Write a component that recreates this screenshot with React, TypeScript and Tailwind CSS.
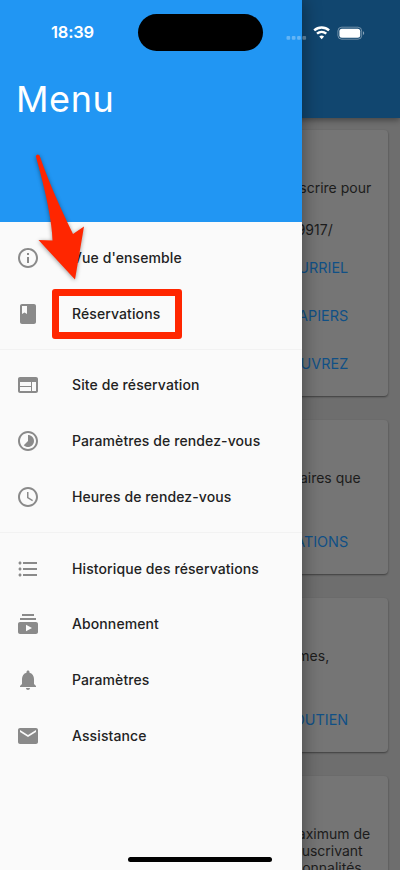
import React from "react";

const ICONS = {
  info: "M11 7h2v2h-2zm0 4h2v6h-2zm1-9C6.48 2 2 6.48 2 12s4.48 10 10 10 10-4.48 10-10S17.52 2 12 2zm0 18c-4.41 0-8-3.59-8-8s3.59-8 8-8 8 3.59 8 8-3.59 8-8 8z",
  book: "M18 2H6c-1.1 0-2 .9-2 2v16c0 1.1.9 2 2 2h12c1.1 0 2-.9 2-2V4c0-1.1-.9-2-2-2zM6 4h5v8l-2.5-1.5L6 12V4z",
  web: "M20 4H4c-1.1 0-1.99.9-1.99 2L2 18c0 1.1.9 2 2 2h16c1.1 0 2-.9 2-2V6c0-1.1-.9-2-2-2zm-5 14H4v-4h11v4zm0-5H4V9h11v4zm5 5h-4V9h4v9z",
  timelapse: "M16.24 7.76C15.07 6.59 13.54 6 12 6v6l-4.24 4.24c2.34 2.34 6.14 2.34 8.49 0 2.34-2.34 2.34-6.14-.01-8.48zM12 2C6.48 2 2 6.48 2 12s4.48 10 10 10 10-4.48 10-10S17.52 2 12 2zm0 18c-4.42 0-8-3.58-8-8s3.58-8 8-8 8 3.58 8 8-3.58 8-8 8z",
  clock: "M11.99 2C6.47 2 2 6.48 2 12s4.47 10 9.99 10C17.52 22 22 17.52 22 12S17.52 2 11.99 2zM12 20c-4.42 0-8-3.58-8-8s3.58-8 8-8 8 3.58 8 8-3.58 8-8 8zm.5-13H11v6l5.25 3.15.75-1.23-4.5-2.67z",
  list: "M4 10.5c-.83 0-1.5.67-1.5 1.5s.67 1.5 1.5 1.5 1.5-.67 1.5-1.5-.67-1.5-1.5-1.5zm0-6c-.83 0-1.5.67-1.5 1.5S3.17 7.5 4 7.5 5.5 6.83 5.5 6 4.83 4.5 4 4.5zm0 12c-.83 0-1.5.68-1.5 1.5s.68 1.5 1.5 1.5 1.5-.68 1.5-1.5-.67-1.5-1.5-1.5zM7 19h14v-2H7v2zm0-6h14v-2H7v2zm0-8v2h14V5H7z",
  subscriptions: "M20 8H4V6h16v2zm-2-6H6v2h12V2zm4 10v8c0 1.1-.9 2-2 2H4c-1.1 0-2-.9-2-2v-8c0-1.1.9-2 2-2h16c1.1 0 2 .9 2 2zm-6 4-6-3.27v6.53L16 16z",
  bell: "M12 22c1.1 0 2-.9 2-2h-4c0 1.1.89 2 2 2zm6-6v-5c0-3.07-1.64-5.64-4.5-6.32V4c0-.83-.67-1.5-1.5-1.5s-1.5.67-1.5 1.5v.68C7.63 5.36 6 7.92 6 11v5l-2 2v1h16v-1l-2-2z",
  mail: "M20 4H4c-1.1 0-1.99.9-1.99 2L2 18c0 1.1.9 2 2 2h16c1.1 0 2-.9 2-2V6c0-1.1-.9-2-2-2zm0 4-8 5-8-5V6l8 5 8-5v2z",
};

function Item({ icon, label, track = "tracking-[0.1px]" }: { icon: keyof typeof ICONS; label: string; track?: string }) {
  return (
    <li className="flex h-[55.75px] items-center gap-8 pl-4">
      <svg viewBox="0 0 24 24" className="size-6 shrink-0 fill-[#8a8a8a]">
        <path d={ICONS[icon]} />
      </svg>
      <span className={`whitespace-nowrap text-[14px] leading-5 font-medium text-[#222] ${track}`}>{label}</span>
    </li>
  );
}

function Divider() {
  return (
    <li className="flex h-4 items-center">
      <div className="h-px w-full bg-[#f2f2f2]" />
    </li>
  );
}

function Card({ size, children }: { size: string; children: React.ReactNode }) {
  return (
    <section className={`ml-3 mr-[12.3px] flex shrink-0 flex-col items-end overflow-hidden rounded-[4px] bg-[#757575] text-[14px] leading-[17px] text-[#1c1c1c] shadow-[0_1px_2px_rgba(0,0,0,0.45)] ${size}`}>
      {children}
    </section>
  );
}

function Action({ label }: { label: string }) {
  return (
    <div className="flex h-[47.7px] shrink-0 items-center pr-[39.5px] text-[14.4px] text-[#105086]">{label}</div>
  );
}

export default function App() {
  return (
    <div className="relative h-[870px] w-[400px] overflow-hidden bg-[#6e6e6e] font-['Inter','Liberation_Sans',sans-serif]">
      <main className="flex h-full flex-col">
        <header className="relative h-[117.5px] shrink-0 bg-[#11466f] shadow-[0_2px_6px_rgba(0,0,0,0.4)]" />
        <div className="flex flex-col gap-6 pt-3">
          <Card size="h-[266.5px]">
            <p className="mt-[49px] pr-[16.5px]">scrire pour</p>
            <p className="mt-[25px] mb-[6.5px] pr-[55px]">9917/</p>
            <Action label="URRIEL" />
            <Action label="PAPIERS" />
            <Action label="OUVREZ" />
          </Card>
          <Card size="h-[154px]">
            <p className="mt-[49px] mb-8 pr-[27px]">aires que</p>
            <Action label="ATIONS" />
          </Card>
          <Card size="h-[154px]">
            <p className="mt-[49px] mb-8 pr-[58.5px]">mes,</p>
            <Action label="OUTIEN" />
          </Card>
          <Card size="h-[154px]">
            <p className="mt-[49px] pr-[17.5px]">aximum de</p>
            <p className="pr-[25px]">uscrivant</p>
            <p className="pr-[26px]">onnalités</p>
          </Card>
        </div>
      </main>

      <nav className="absolute inset-y-0 left-0 w-[302px] bg-[#fafafa] shadow-[2px_0_16px_rgba(0,0,0,0.35)]">
        <div className="h-[222px] bg-[#2196f3] pt-[76px] pl-4">
          <h1 className="text-[36px] leading-[46px] tracking-[0.6px] text-white">Menu</h1>
        </div>
        <ul className="pt-2">
          <Item icon="info" label="Vue d'ensemble" />
          <Item icon="book" label="Réservations" />
          <Divider />
          <Item icon="web" label="Site de réservation" />
          <Item icon="timelapse" label="Paramètres de rendez-vous" />
          <Item icon="clock" label="Heures de rendez-vous" />
          <Divider />
          <Item icon="list" label="Historique des réservations" />
          <Item icon="subscriptions" label="Abonnement" />
          <Item icon="bell" label="Paramètres" />
          <Item icon="mail" label="Assistance" />
        </ul>
      </nav>

      {/* Status bar */}
      <div className="absolute inset-x-0 top-[14px] flex h-[37px] items-center text-white">
        <span className="ml-[51px] w-[86.5px] text-[16.5px] font-semibold tracking-[-0.2px]">18:39</span>
        <div className="h-[37px] w-[125px] rounded-full bg-black" />
        <svg viewBox="0 0 90 20" className="ml-[17.5px] h-5 w-[90px]">
          <g fill="#fff" fillOpacity=".3">
            <rect x="6.5" y="13" width="3.7" height="3.7" rx="1" />
            <rect x="11.8" y="13" width="3.7" height="3.7" rx="1" />
            <rect x="17.1" y="13" width="3.7" height="3.7" rx="1" />
            <rect x="22.4" y="13" width="3.7" height="3.7" rx="1" />
          </g>
          <g fill="none" stroke="#fff" strokeWidth="2.4">
            <path d="M34.2 7.4a11 11 0 0 1 14.9 0" />
            <path d="M37 10.7a7 7 0 0 1 9.3 0" />
          </g>
          <path d="M41.65 16.2l-2.4-2.6a3.6 3.6 0 0 1 4.8 0z" fill="#fff" />
          <rect x="57.9" y="4.2" width="23.8" height="12" rx="3.8" fill="none" stroke="#fff" strokeOpacity=".4" />
          <rect x="59.4" y="5.7" width="20.8" height="9" rx="2.5" fill="#fff" />
          <path d="M83 8.3c1.6.6 1.6 3.2 0 3.8z" fill="#fff" fillOpacity=".5" />
        </svg>
      </div>

      {/* Callout around the bookings entry */}
      <div className="absolute top-[289px] left-[52px] h-[49.5px] w-[130px] rounded-[3px] border-[7px] border-[#ff2600]" />
      <svg viewBox="0 0 100 150" className="absolute top-[140px] left-0 h-[150px] w-[100px] drop-shadow-[0_1px_2px_rgba(0,0,0,0.4)]">
        <path d="M35.8 16.2Q36.8 13.2 39.5 15.2Q51 49 73 94L84 86.5L75 139.5L38.5 100L52.5 100.5Q51.5 72 35.8 16.2Z" fill="#ff2600" />
      </svg>
      <div className="absolute top-[856.5px] left-[128px] h-[5px] w-[144px] rounded-full bg-black" />
    </div>
  );
}
